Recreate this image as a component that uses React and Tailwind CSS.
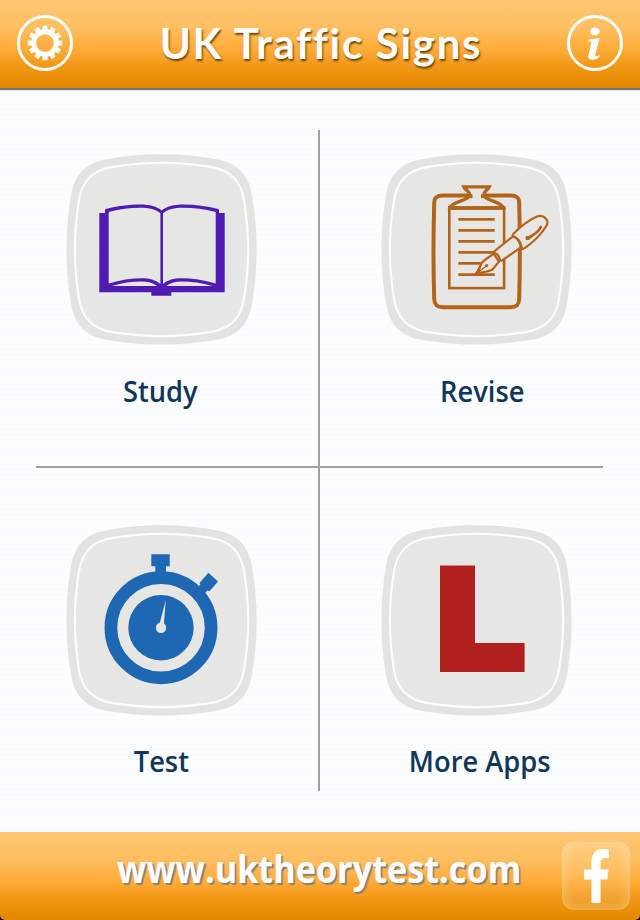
import { FaFacebookF } from 'react-icons/fa'
import { BsInfo } from 'react-icons/bs'

const TILE = 'M95.500 .3C74 .3 58 2.400 42 4.900C20 8.300 8.300 20 4.900 42C2.400 58 .5 74 .5 95.500C.5 117 2.400 133 4.900 149C8.300 171 20 182.700 42 186.100C58 188.600 74 190.600 95.500 190.600C117 190.600 133 188.600 149 186.100C171 182.700 182.700 171 186.100 149C188.600 133 190.600 117 190.600 95.500C190.600 74 188.600 58 186.100 42C182.700 20 171 8.300 149 4.900C133 2.400 117 .3 95.500 .3Z'

const TEETH = [0, 30, 60, 90, 120, 150, 180, 210, 240, 270, 300, 330]

const LINES = [65.3, 76.3, 87.3, 98.3, 109.3, 120.6]

function Tile({ children }) {
  return (
    <svg viewBox="0 0 191 191" className="block w-[191px] h-[191px]">
      <defs>
        <pattern id="weave" width="3" height="3" patternUnits="userSpaceOnUse">
          <path d="M0 0L3 3" stroke="#dededc" strokeWidth="0.5" />
        </pattern>
      </defs>
      <path d={TILE} fill="#e4e5e3" />
      <g transform="translate(95.500 95.500) scale(.912) translate(-95.500 -95.500)">
        <path d={TILE} fill="#e8e9e7" />
      </g>
      <path d={TILE} fill="url(#weave)" />
      <g transform="translate(95.500 95.500) scale(.912) translate(-95.500 -95.500)">
        <path d={TILE} fill="none" stroke="#fdfdfc" strokeWidth="2.300" />
      </g>
      {children}
    </svg>
  )
}

function Book() {
  return (
    <>
      <path
        fill="#4f1bb3"
        d="M33.300 59H39V55.200C52 52 62 50.500 74 50.500C84 50.500 91 52.500 95.700 56.500C100.400 52.500 107.400 50.500 117.400 50.500C129.400 50.500 140 52 153 55.200V59H158.700V138.300H105.300V141.700H85.300V138.300H33.300Z"
      />
      <path
        fill="#e6e7e5"
        d="M42.700 58C54 55 64 53.800 74 53.800C83 53.800 90 55.500 94.400 59.300V130C89 126 84 124.300 76 124.300C65 124.300 54 126 42.700 129.500ZM149.700 58C138 55 128 53.800 117.400 53.800C108.400 53.800 101.400 55.500 97 59.300V130C102 126 107.400 124.300 115.400 124.300C126.400 124.300 138 126 149.700 129.500Z"
      />
      <path
        fill="#e6e7e5"
        d="M46 132C56 129 66 127.600 76 127.600C82 127.600 87 129 91.300 132ZM100.300 132C104.500 129 109.500 127.600 115.400 127.600C125.400 127.600 136 129 146.500 132Z"
      />
    </>
  )
}

function Clipboard() {
  return (
    <g fill="#e6e7e5" stroke="#b4641a">
      <path
        d="M53.200 49C53.200 43.500 55.500 41.500 62 41.500H129.500C136 41.500 138.200 43.500 138.200 49C139 80 139 115 138.200 145C138 151 135.500 153.200 129.500 153.200H62C56 153.200 53.500 151 53.200 145C52.300 115 52.300 80 53.200 49Z"
        strokeWidth="4"
      />
      <rect x="68.300" y="53.800" width="54.800" height="80.300" strokeWidth="2.600" />
      <path d="M82.700 32.800H108.300C106.500 36.500 103 37 103 40.500C103 47 120 47 122.500 54H68.900C71.500 47 88.500 47 88.500 40.500C88.500 37 84.500 36.500 82.700 32.800Z" strokeWidth="3.300" />
      <path d="M67 54H124.400" strokeWidth="3.600" />
      <path d="M87 42.500L91 40.500V44ZM104.500 42.500L100.500 40.500V44Z" fill="#b4641a" strokeWidth="1" />
      {LINES.map((y) => (
        <path key={y} d={`M77.300 ${y}H113.700`} strokeWidth="2.700" />
      ))}
      <g strokeWidth="2.200" strokeLinejoin="round">
        <path d="M94.500 120C98 117 99 112 101 108.500C104 105 109 103 112.500 99.500L118 107.700C115.500 110.500 113.500 113 111.500 115.500C106 118.500 100 118 94.500 120Z" />
        <path d="M94.500 120L99.500 110.500L98.500 117.500Z" fill="#b4641a" strokeWidth="1" />
        <path d="M95 120L105 112.300" strokeWidth="1.300" />
        <circle cx="105.600" cy="111.600" r="1.700" fill="#b4641a" stroke="none" />
        <path d="M113.300 97.300L132 82.300C136 84 139 88 139.800 93.500L120.500 106.800C118.500 107 119 103.500 116.800 101C115 98.500 112.300 99.500 113.300 97.300Z" />
        <path d="M132 80.300C139 73 147 66.500 156 62.500C162 60.500 167.500 65 166.300 70.500C160 81 151.500 89 143 94.500C141.500 95.300 140.800 94.500 140.500 92.500C139.500 87.500 136.500 83.800 132.500 82.300C131.500 81.800 131.500 81 132 80.300Z" />
        <path d="M147 84.500C151.500 80.500 156.500 80 159.800 73" fill="none" strokeWidth="2.700" strokeLinecap="round" />
        <circle cx="146.700" cy="84" r="2.300" fill="#b4641a" stroke="none" />
      </g>
    </g>
  )
}

function Stopwatch() {
  return (
    <g fill="#1e67b3">
      <path d="M85.300 29.300H103.700V41.300H100V48H89.300V41.300H85.300Z" />
      <path d="M142.400 47.700L152 56.400L143.500 66.300L141.500 65.500L139 68L132.300 61.500L134.500 59.500L133.500 58Z" />
      <circle cx="95" cy="102.700" r="50.100" fill="none" stroke="#1e67b3" strokeWidth="12.700" />
      <circle cx="95" cy="102.700" r="32.700" />
      <path d="M99.800 75L97.900 99H93.500Z" fill="#e6e7e5" />
      <circle cx="95" cy="102.700" r="5.200" fill="#e6e7e5" />
    </g>
  )
}

function LPlate() {
  return (
    <g fill="#b11f1f">
      <rect x="59" y="40.500" width="35" height="106.500" />
      <rect x="59" y="118" width="84.600" height="29" />
    </g>
  )
}

function Gear() {
  return (
    <svg viewBox="-28 -28 56 56" className="w-14 h-14">
      <circle r="26.500" fill="none" stroke="#fff" strokeWidth="3" />
      <circle r="11.300" fill="none" stroke="#fff" strokeWidth="5" />
      {TEETH.map((a) => (
        <path key={a} d="M-2.700 -13L-2.300 -17.200H2.300L2.700 -13Z" fill="#fff" transform={`rotate(${a})`} />
      ))}
    </svg>
  )
}

export default function App() {
  const label = "font-['Open_Sans'] font-semibold text-[28px] leading-8 text-[#12365a] whitespace-nowrap scale-x-[0.975]"

  return (
    <div className="w-[640px] h-[920px] flex flex-col overflow-hidden bg-[#fbfcfe] bg-[repeating-linear-gradient(0deg,#fafbfd_0px,#fafbfd_1px,#fcfdff_1px,#fcfdff_5px)]">
      <header className="h-[88px] shrink-0 flex items-start justify-between pt-[15px] px-[17px] bg-[linear-gradient(#ffc671_0%,#ffbf62_30%,#ffad3a_55%,#f09818_75%,#e68a00_95%)] shadow-[0_2px_1px_#77727b]">
        <Gear />
        <h1 className="pl-[2px] font-['Lato'] font-bold text-[42px] leading-[56px] tracking-[1.700px] text-white whitespace-nowrap [text-shadow:1px_2px_2px_#704300]">
          UK Traffic Signs
        </h1>
        <div className="w-14 h-14 rounded-full border-[3px] border-white text-white flex items-center justify-center">
          <BsInfo preserveAspectRatio="none" strokeWidth="0.3" className="w-[66px] h-[55px] shrink-0" />
        </div>
      </header>

      <main className="h-[744px] pt-[42px] pl-9 pr-[37px] grid grid-cols-[284px_283px] grid-rows-[338px_323px] content-start">
        <section className="border-r-2 border-b-2 border-[#a0a0a3] pt-6 pl-[30px]">
          <Tile><Book /></Tile>
          <div className="w-[189px] mt-[30px] flex justify-center">
            <span className={label}>Study</span>
          </div>
        </section>
        <section className="border-b-2 border-[#a0a0a3] pt-6 pl-[61px]">
          <Tile><Clipboard /></Tile>
          <div className="w-[202px] mt-[30px] flex justify-center">
            <span className={label}>Revise</span>
          </div>
        </section>
        <section className="border-r-2 border-[#a0a0a3] pt-[57px] pl-[30px]">
          <Tile><Stopwatch /></Tile>
          <div className="w-[190px] mt-[29px] flex justify-center">
            <span className={label}>Test</span>
          </div>
        </section>
        <section className="pt-[57px] pl-[61px]">
          <Tile><LPlate /></Tile>
          <div className="w-[197px] mt-[29px] flex justify-center">
            <span className={label}>More Apps</span>
          </div>
        </section>
      </main>

      <div className="bg-black">
        <footer className="h-[88px] rounded-b-[5px] flex items-start justify-between pl-[117px] pr-[10px] pt-[10px] bg-[linear-gradient(#ffc671_0%,#ffbf62_30%,#ffad3a_55%,#f09818_75%,#e68a00_95%)]">
          <span className="font-['Open_Sans'] font-bold text-[37px] leading-[54px] text-white whitespace-nowrap origin-left scale-x-[0.925] [text-shadow:2px_2px_1px_#85827c]">
            www.uktheorytest.com
          </span>
          <div className="w-[68px] h-[68px] shrink-0 rounded-xl bg-white/10 shadow-[inset_0_0_12px_rgba(255,255,255,0.4)] flex items-center justify-center">
            <FaFacebookF preserveAspectRatio="none" className="w-[29px] h-[54px] text-white" />
          </div>
        </footer>
      </div>
    </div>
  )
}
